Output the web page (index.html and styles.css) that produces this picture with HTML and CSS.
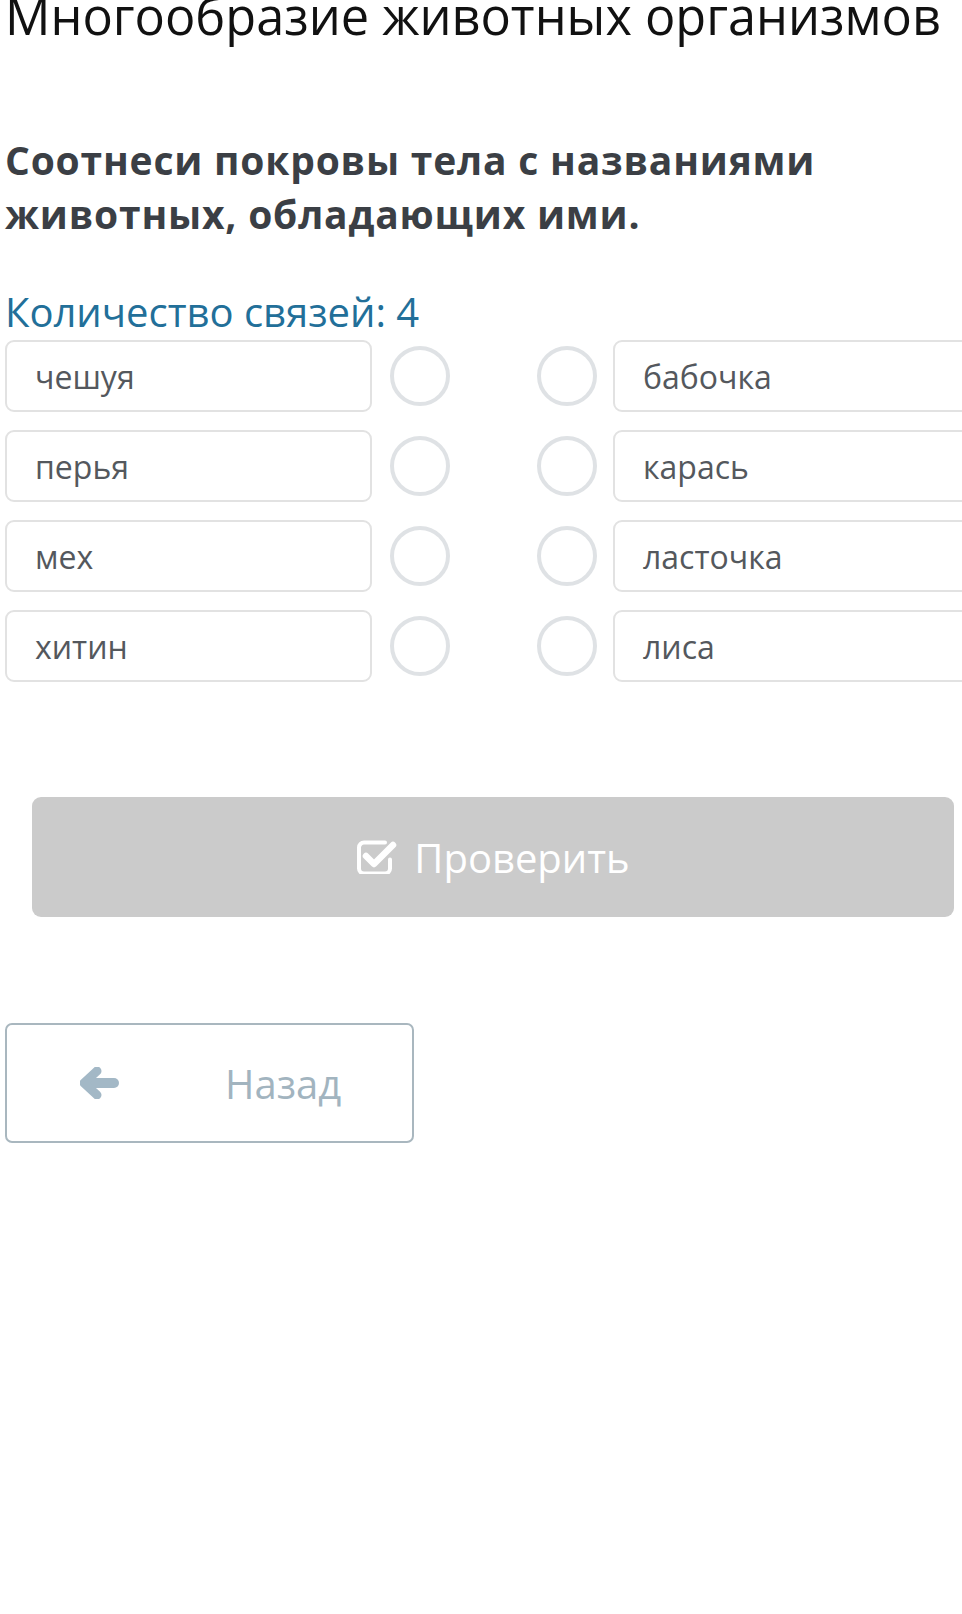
FILE: index.html
```html
<!DOCTYPE html>
<html lang="ru">
<head>
<meta charset="utf-8">
<title>Многообразие животных организмов</title>
<link rel="stylesheet" href="styles.css">
</head>
<body>
<div class="page">
  <h1 class="title">Многообразие животных организмов</h1>
  <h2 class="question">Соотнеси покровы тела с названиями животных, обладающих ими.</h2>
  <div class="counter">Количество связей: 4</div>

  <div class="match">
    <div class="row">
      <div class="item">чешуя</div>
      <span class="dot"></span>
      <span class="dot dot-right"></span>
      <div class="item">бабочка</div>
    </div>
    <div class="row">
      <div class="item">перья</div>
      <span class="dot"></span>
      <span class="dot dot-right"></span>
      <div class="item">карась</div>
    </div>
    <div class="row">
      <div class="item">мех</div>
      <span class="dot"></span>
      <span class="dot dot-right"></span>
      <div class="item">ласточка</div>
    </div>
    <div class="row">
      <div class="item">хитин</div>
      <span class="dot"></span>
      <span class="dot dot-right"></span>
      <div class="item">лиса</div>
    </div>
  </div>

  <div class="check-wrap">
    <button class="check-btn" type="button">
      <svg class="check-icon" viewBox="0 0 41 35" width="41" height="35" aria-hidden="true">
        <path d="M29 3.5 H8 a5 5 0 0 0 -5 5 v21 a5 5 0 0 0 5 5 h21 a5 5 0 0 0 5 -5 v-9" fill="none" stroke="#fff" stroke-width="4" stroke-linecap="round"/>
        <path d="M10 17 l8 8 l19 -19" fill="none" stroke="#fff" stroke-width="6.5" stroke-linecap="round" stroke-linejoin="round"/>
      </svg>
      <span>Проверить</span>
    </button>
  </div>

  <button class="back-btn" type="button">
    <svg class="back-icon" viewBox="0 0 40 32" width="40" height="32" aria-hidden="true">
      <path d="M34 16 H10" fill="none" stroke="#a3b8c6" stroke-width="10" stroke-linecap="round"/>
      <path d="M17 4 L4 16 L17 28" fill="none" stroke="#a3b8c6" stroke-width="9" stroke-linecap="round" stroke-linejoin="round"/>
    </svg>
    <span class="back-text">Назад</span>
  </button>
</div>
</body>
</html>
```

FILE: styles.css
```css
html, body {
  margin: 0;
  padding: 0;
  background: #fff;
  overflow-x: hidden;
}

.page {
  width: 980px;
  padding-left: 5px;
  font-family: "Open Sans", "Noto Sans", sans-serif;
  min-height: 1614px;
  box-sizing: border-box;
}

.title {
  margin: -9px 0 0 0;
  font-size: 50.5px;
  line-height: 50.5px;
  font-weight: 400;
  color: #111;
  white-space: nowrap;
}

.question {
  margin: 91.5px 0 0 0;
  width: 900px;
  font-size: 39px;
  line-height: 54px;
  letter-spacing: 0.8px;
  font-weight: 700;
  color: #3b3f45;
}

.counter {
  margin-top: 45.5px;
  font-size: 40px;
  line-height: 50px;
  color: #226f99;
}

.match {
  margin-top: 3.5px;
  display: flex;
  flex-direction: column;
  gap: 18px;
}

.row {
  display: flex;
  align-items: center;
  height: 72px;
}

.item {
  box-sizing: border-box;
  width: 367px;
  height: 72px;
  border: 2px solid #e2e2e2;
  border-radius: 9px;
  padding-left: 28px;
  display: flex;
  align-items: center;
  font-size: 32px;
  color: #54585d;
}

.dot {
  box-sizing: border-box;
  width: 60px;
  height: 60px;
  border: 4px solid #dfe2e5;
  border-radius: 50%;
  margin-left: 18px;
  flex: none;
}

.dot-right {
  margin-left: 87px;
  margin-right: 16px;
}

.check-wrap {
  padding-left: 27px;
  margin-top: 115px;
}

.check-btn {
  box-sizing: border-box;
  width: 922px;
  height: 120px;
  border: none;
  border-radius: 9px;
  background: #cbcbcb;
  color: #fff;
  display: flex;
  align-items: center;
  justify-content: center;
  gap: 17px;
  font-family: "Open Sans", "Noto Sans", sans-serif;
  font-size: 40px;
  padding: 0;
}

.check-icon {
  flex: none;
  margin-top: -2px;
}

.back-btn {
  box-sizing: border-box;
  margin-top: 106px;
  width: 409px;
  height: 120px;
  border: 2px solid #a9b7bf;
  border-radius: 7px;
  background: #fff;
  display: flex;
  align-items: center;
  padding: 0 0 0 73px;
  font-family: "Open Sans", "Noto Sans", sans-serif;
}

.back-icon {
  flex: none;
}

.back-text {
  margin-left: 105px;
  font-size: 40px;
  color: #a2b4bf;
}
```
